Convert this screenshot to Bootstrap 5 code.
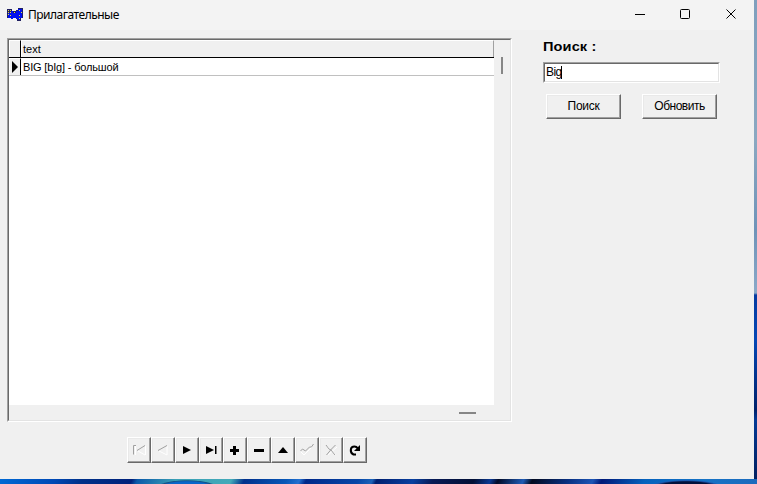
<!DOCTYPE html>
<html lang="ru">
<head>
<meta charset="utf-8">
<meta name="viewport" content="width=device-width, initial-scale=1">
<title>Прилагательные</title>
<link href="https://cdn.jsdelivr.net/npm/bootstrap@5.3.0/dist/css/bootstrap.min.css" rel="stylesheet">
<style>
body{width:757px;height:484px;font:11px/13px "Liberation Sans",Arial,sans-serif;color:#000;
 background:
 radial-gradient(ellipse 30px 7px at 187px 487px,#0866ca 75%,#145287 90%,transparent 100%) no-repeat,
 radial-gradient(ellipse 36px 7px at 686px 487px,#02103c 75%,#1c57ae 92%,transparent 100%) no-repeat,
 linear-gradient(#7f9fbd,#8ba8c1 140px,#6f93b8 230px,#8ba9c8 293px,#063ba0 295px,#0548b5 340px,#00216a 410px,#043a95 420px,#022060) right top/3px 479px no-repeat,
 linear-gradient(115deg,#0069d4 0,#0048b5 50px,#003088 75px,#00217b 120px,#0a59a9 125px,#3aa0b5 160px,#43aab9 210px,#00308c 222px,#0757b7 260px,#2370d0 272px,#002889 278px,#0647a8 325px,#1b62b8 338px,#001f70 342px,#0840a0 375px,#071a55 393px,#020f35 430px,#0a3892 445px,#010a28 452px,#1f5bb5 475px,#020a20 483px,#082f80 515px,#1c55b5 538px,#001878 546px,#0562bd 585px,#1673c5 640px,#1d68bb 700px,#00184e 713px,#00113c 757px) 0 479px/757px 5px no-repeat}
.app-window{width:754px;height:479px;background:#f0f0f0}
.titlebar{height:30px;background:#f3f3f3;padding-left:7px}
.title-label{font:12px/16px "Noto Sans","Open Sans",sans-serif;margin-left:5px;width:500px;letter-spacing:-.5px}
.workspace{padding:8px 0 0 7px}
.db-grid{width:505px;height:384px;border:1px solid;border-color:#a0a0a0 #fff #fff #a0a0a0}
.grid-inner{height:382px;border:1px solid;border-color:#696969 #e3e3e3 #e3e3e3 #696969;background:#f0f0f0}
.grid-area{width:485px;height:365px;background:#fff}
.grid-head{height:18px;border-bottom:1px solid #000;background:#f0f0f0}
.grid-row{height:18px;border-bottom:1px solid #c0c0c0}
.marker{width:12px;border-right:1px solid #000;background:#f0f0f0;border-top:1px solid #fff;border-left:1px solid #fff}
.head-cell{border-top:1px solid #fff;border-left:1px solid #fff;border-right:1px solid #a0a0a0;padding:2px 0 0 1px}
.row-cell{padding:3px 0 0 2px;white-space:nowrap;letter-spacing:-.17px}
.vbar{padding:17px 0 0 7px}
.vthumb{width:2px;height:17px;background:#868686}
.hthumb{width:17px;height:2px;background:#868686;margin:7px 0 0 450px}
.side{width:180px;margin-left:31px}
.search-label{font:bold 13px/16px "Liberation Sans",Arial,sans-serif;letter-spacing:.1px;width:100px;padding-top:1px;height:16px;transform:scaleX(1.12);transform-origin:left}
.search-field{width:177px;height:21px;border:1px solid;border-color:#a0a0a0 #fff #fff #a0a0a0;margin-top:8px}
.field-inner{height:19px;border:1px solid;border-color:#696969 #e3e3e3 #e3e3e3 #696969;background:#fff;padding-left:1px}
.field-text{font-size:12px;letter-spacing:-.6px}
.caret{width:1px;height:13px;margin-left:-1px;background:#000}
.raised,.raised:hover{border:1px solid;border-color:#fff #696969 #696969 #fff;border-radius:0;background:#f0f0f0;box-shadow:inset -1px -1px #a0a0a0,inset 1px 1px #e9e9e9;color:#000;padding:0}
.push-row{margin:11px 0 0 3px;gap:21px}
.push{width:75px;height:25px;font-size:12px;line-height:14px;letter-spacing:-.5px;padding-bottom:1px}
.push.find{letter-spacing:-.3px}
.navigator{margin:15px 0 0 120px;width:241px}
.tool{width:24px;height:26px}
.tool svg,.titlebar svg,.marker svg{display:block}
</style>
<script src="https://cdn.jsdelivr.net/npm/bootstrap@5.3.0/dist/js/bootstrap.bundle.min.js"></script>
</head>
<body class="overflow-hidden">
<main class="app-window overflow-hidden">
 <header class="titlebar d-flex align-items-center">
  <svg width="16" height="14" viewBox="0 0 16 14" shape-rendering="crispEdges"><path fill="#202060" d="M0 1h5v9H0zM5 3h4v7H5zM9 2h2V0h5v10h-2v3h-4v-2H9z"/><path fill="#0010f0" d="M1 5h8v5H1zM4 3h2v8H4zM9 3h2v8H9zM11 1h4v9h-4zM11 10h2v2h-2z"/><path fill="#e8dc40" d="M1 2h1v1H1zM3 2h1v1H3zM1 4h1v1H1zM3 4h1v1H3zM1 6h1v1H1zM3 7h1v1H3zM7 4h1v1H7zM12 2h1v1h-1zM14 4h1v1h-1zM12 7h1v1h-1zM12 10h1v1h-1z"/></svg>
  <span class="title-label">Прилагательные</span>
  <svg class="ms-auto" width="119" height="16" viewBox="0 0 119 16" fill="none" stroke="#000"><path d="M0 7.500h10M91.500 2.500l9 9m0-9l-9 9"/><rect x="45.500" y="2.500" width="9" height="9" rx="1"/></svg>
 </header>
 <div class="workspace">
  <div class="d-flex">
   <section class="db-grid">
    <div class="grid-inner">
     <div class="d-flex">
      <div class="grid-area">
       <div class="grid-head d-flex"><div class="marker"></div><div class="head-cell flex-grow-1">text</div></div>
       <div class="grid-row d-flex"><div class="marker"><svg width="9" height="16" viewBox="0 0 9 16"><path d="M2 2v12l6-6z"/></svg></div><div class="row-cell">BIG [bIg] - большой</div></div>
      </div>
      <div class="vbar"><div class="vthumb"></div></div>
     </div>
     <div class="d-flex"><div class="hthumb"></div></div>
    </div>
   </section>
   <section class="side">
    <div class="search-label">Поиск :</div>
    <div class="search-field"><div class="field-inner d-flex align-items-center"><span class="field-text">Big</span><span class="caret"></span></div></div>
    <div class="push-row d-flex"><button class="btn raised push find">Поиск</button><button class="btn raised push">Обновить</button></div>
   </section>
  </div>
  <nav class="navigator d-flex">
   <button class="btn raised tool" aria-label="Первая"><svg width="22" height="24" viewBox="0 0 22 24" fill="none"><path stroke="#fff" d="M7.500 8v9M17.500 8v9M10 13l7 4"/><path stroke="#a0a0a0" d="M5.500 16.500V7.500H8M9 12.500l8-5"/></svg></button>
   <button class="btn raised tool" aria-label="Назад"><svg width="22" height="24" viewBox="0 0 22 24" fill="none"><path stroke="#fff" d="M7 13l8 4V8"/><path stroke="#a0a0a0" d="M6 12.500l9-5"/></svg></button>
   <button class="btn raised tool" aria-label="Вперёд"><svg width="22" height="24" viewBox="0 0 22 24"><path d="M7 8v8l8-4z"/></svg></button>
   <button class="btn raised tool" aria-label="Последняя"><svg width="22" height="24" viewBox="0 0 22 24"><path d="M6 8v8l8-4zM15 8h1.500v8H15z"/></svg></button>
   <button class="btn raised tool" aria-label="Добавить"><svg width="22" height="24" viewBox="0 0 22 24"><path d="M9 8h3v3h3v3h-3v3H9v-3H6v-3h3z"/></svg></button>
   <button class="btn raised tool" aria-label="Удалить"><svg width="22" height="24" viewBox="0 0 22 24"><path d="M6 11h10v3H6z"/></svg></button>
   <button class="btn raised tool" aria-label="Изменить"><svg width="22" height="24" viewBox="0 0 22 24"><path d="M6 15h10l-5-6z"/></svg></button>
   <button class="btn raised tool" aria-label="Сохранить"><svg width="22" height="24" viewBox="0 0 22 24" fill="none"><path stroke="#fff" d="M5 14l3 3 4-4 5-5"/><path stroke="#a0a0a0" d="M4.500 13l2-2 3 2 4-4h2l2-3"/></svg></button>
   <button class="btn raised tool" aria-label="Отменить"><svg width="22" height="24" viewBox="0 0 22 24" fill="none"><path stroke="#fff" d="M7 8l9 9m1-8l-9 8"/><path stroke="#a0a0a0" d="M6 7l3 4 2 1 4 5M15.500 7l-4 4-5 6"/></svg></button>
   <button class="btn raised tool" aria-label="Обновить данные"><svg width="22" height="24" viewBox="0 0 22 24"><path fill="none" stroke="#000" stroke-width="2" d="M12 16.500H9.500C5.500 14.500 6 8.500 10.500 8.500q2 0 3.500 2"/><path d="M16 7v6h-6z"/></svg></button>
  </nav>
 </div>
</main>
</body>
</html>
